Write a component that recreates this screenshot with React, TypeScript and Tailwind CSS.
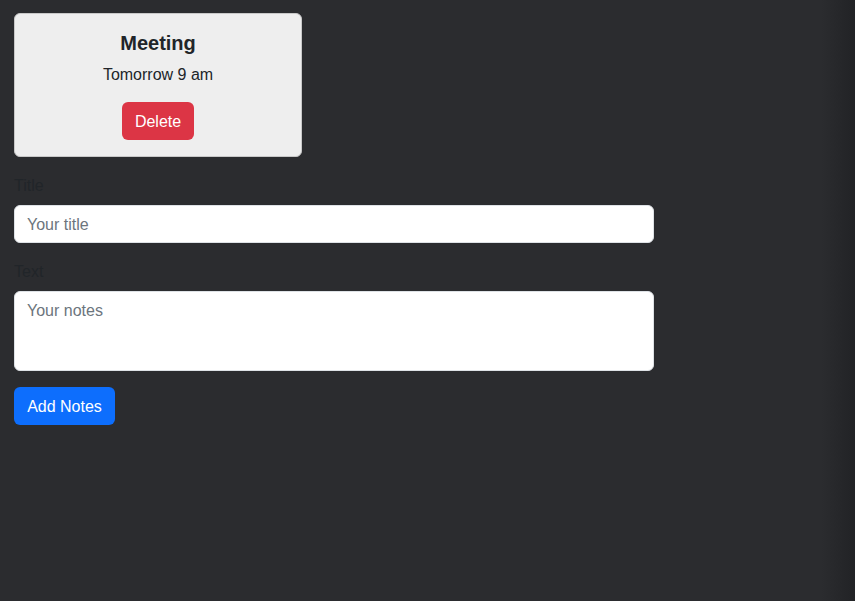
const font = { fontFamily: '"Segoe UI", "Liberation Sans", Arial, sans-serif' };

function NoteCard({ title, text }: { title: string; text: string }) {
  return (
    <div className="w-[288px] rounded-md border border-[#c8c8c8] bg-[#eeeeee] px-4 pt-4 pb-4 text-center">
      <h5 className="mb-[7px] pt-px text-[20px] leading-[24px] font-semibold text-[#212529]">{title}</h5>
      <p className="mb-[15px] pt-px text-base leading-6 text-[#212529]">{text}</p>
      <button
        type="button"
        className="h-[38px] w-[72px] rounded-md bg-[#dc3545] pt-[2px] text-base text-white"
      >
        Delete
      </button>
    </div>
  );
}

export default function App() {
  return (
    <div
      style={font}
      className="min-h-screen bg-[linear-gradient(to_right,#2b2c2f_96%,#222326)] pt-[13px] pl-[14px] text-[#212529]"
    >
      <NoteCard title="Meeting" text="Tomorrow 9 am" />

      <form className="mt-4 w-[640px]">
        <div className="mb-4">
          <label className="mb-2 block pt-px text-base leading-6 text-[#212529]">Title</label>
          <input
            type="text"
            placeholder="Your title"
            className="-mt-px block h-[38px] w-full rounded-md border border-[#dee2e6] bg-white px-3 pt-[2px] text-base text-[#212529] placeholder:text-[#6c757d] focus:outline-none"
          />
        </div>
        <div className="mb-4">
          <label className="mb-2 block pt-px text-base leading-6 text-[#212529]">Text</label>
          <textarea
            placeholder="Your notes"
            className="-mt-px block h-[80px] w-full resize-none rounded-md border border-[#dee2e6] bg-white px-3 pt-[7px] pb-1.5 text-base leading-6 text-[#212529] placeholder:text-[#6c757d] focus:outline-none"
          />
        </div>
        <button
          type="button"
          className="h-[38px] w-[101px] rounded-md bg-[#0d6efd] pt-[2px] text-base text-white"
        >
          Add Notes
        </button>
      </form>
    </div>
  );
}
